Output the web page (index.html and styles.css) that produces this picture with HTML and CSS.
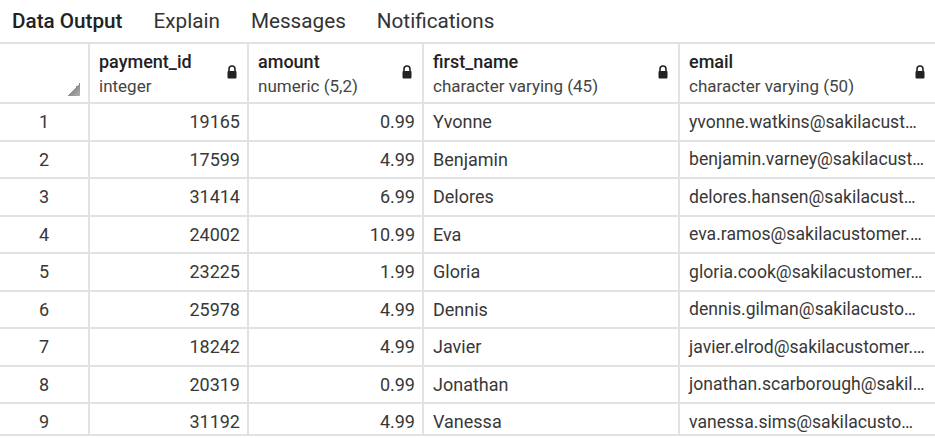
FILE: index.html
```html
<!DOCTYPE html>
<html>
<head>
<meta charset="utf-8">
<link rel="stylesheet" href="styles.css">
</head>
<body>
<div class="tabs">
  <span class="tab active">Data Output</span>
  <span class="tab">Explain</span>
  <span class="tab">Messages</span>
  <span class="tab">Notifications</span>
</div>
<div class="gridwrap">
  <div class="grid">
    <div class="hcell corner"><span class="tri"></span></div>
    <div class="hcell"><div class="htext"><b>payment_id</b><span>integer</span></div><svg class="lock" viewBox="0 0 10 14"><path d="M2 6V4a3 3 0 0 1 6 0v2" fill="none" stroke="#222" stroke-width="1.6"/><rect x="0.5" y="6" width="9" height="7.5" rx="1" fill="#222"/></svg></div>
    <div class="hcell"><div class="htext"><b>amount</b><span>numeric (5,2)</span></div><svg class="lock" viewBox="0 0 10 14"><path d="M2 6V4a3 3 0 0 1 6 0v2" fill="none" stroke="#222" stroke-width="1.6"/><rect x="0.5" y="6" width="9" height="7.5" rx="1" fill="#222"/></svg></div>
    <div class="hcell"><div class="htext"><b>first_name</b><span>character varying (45)</span></div><svg class="lock" viewBox="0 0 10 14"><path d="M2 6V4a3 3 0 0 1 6 0v2" fill="none" stroke="#222" stroke-width="1.6"/><rect x="0.5" y="6" width="9" height="7.5" rx="1" fill="#222"/></svg></div>
    <div class="hcell"><div class="htext"><b>email</b><span>character varying (50)</span></div><svg class="lock" viewBox="0 0 10 14"><path d="M2 6V4a3 3 0 0 1 6 0v2" fill="none" stroke="#222" stroke-width="1.6"/><rect x="0.5" y="6" width="9" height="7.5" rx="1" fill="#222"/></svg></div>

    <div class="cell num">1</div><div class="cell r">19165</div><div class="cell r">0.99</div><div class="cell">Yvonne</div><div class="cell em">yvonne.watkins@sakilacust…</div>
    <div class="cell num">2</div><div class="cell r">17599</div><div class="cell r">4.99</div><div class="cell">Benjamin</div><div class="cell em">benjamin.varney@sakilacust…</div>
    <div class="cell num">3</div><div class="cell r">31414</div><div class="cell r">6.99</div><div class="cell">Delores</div><div class="cell em">delores.hansen@sakilacust…</div>
    <div class="cell num">4</div><div class="cell r">24002</div><div class="cell r">10.99</div><div class="cell">Eva</div><div class="cell em">eva.ramos@sakilacustomer.…</div>
    <div class="cell num">5</div><div class="cell r">23225</div><div class="cell r">1.99</div><div class="cell">Gloria</div><div class="cell em">gloria.cook@sakilacustomer…</div>
    <div class="cell num">6</div><div class="cell r">25978</div><div class="cell r">4.99</div><div class="cell">Dennis</div><div class="cell em">dennis.gilman@sakilacusto…</div>
    <div class="cell num">7</div><div class="cell r">18242</div><div class="cell r">4.99</div><div class="cell">Javier</div><div class="cell em">javier.elrod@sakilacustomer.…</div>
    <div class="cell num">8</div><div class="cell r">20319</div><div class="cell r">0.99</div><div class="cell">Jonathan</div><div class="cell em">jonathan.scarborough@sakil…</div>
    <div class="cell num">9</div><div class="cell r">31192</div><div class="cell r">4.99</div><div class="cell">Vanessa</div><div class="cell em">vanessa.sims@sakilacusto…</div>
  </div>
</div>
</body>
</html>
```
FILE: styles.css
```css
* { box-sizing: border-box; }
html, body { margin: 0; padding: 0; background: #fff; }
body {
  font-family: Roboto, "Noto Sans", sans-serif;
  color: #333;
  width: 935px;
  height: 438px;
  overflow: hidden;
}
.tabs {
  display: flex;
  gap: 31px;
  height: 42px;
  padding: 0 0 0 12px;
  align-items: center;
  font-size: 20.7px;
  color: #333;
}
.tab.active { font-weight: 500; color: #222; }
.gridwrap {
  height: 394px;
  overflow: hidden;
  border-top: 2px solid #e2e2e2;
  border-bottom: 2px solid #e2e2e2;
}
.grid {
  display: grid;
  grid-template-columns: 88px 157px 173px 254px 255px;
  grid-template-rows: 58px repeat(9, 35.5px);
  column-gap: 2px;
  row-gap: 2px;
  background: #e2e2e2;
  width: 935px;
}
.hcell {
  background: #fff;
  display: flex;
  align-items: center;
  justify-content: space-between;
  padding: 0 10px 0 9px;
  position: relative;
}
.htext { display: flex; flex-direction: column; font-size: 17px; line-height: 24px; margin-top: 2px; }
.htext b { font-weight: 500; color: #222; font-size: 18px; }
.htext span { color: #444; }
.lock { width: 10px; height: 14px; margin-top: -2px; }
.corner { padding: 0; }
.tri {
  position: absolute;
  right: 8px;
  bottom: 6px;
  width: 13px;
  height: 13px;
  background: linear-gradient(135deg, transparent 50%, #8a8a8a 50%, #b0b0b0 100%);
}
.cell {
  background: #fff;
  font-size: 18px;
  display: flex;
  align-items: center;
  padding: 0 9px 0 9px;
  color: #383838;
  white-space: nowrap;
  overflow: hidden;
  min-width: 0;
}
.cell.em { padding: 0 0 0 9px; font-size: 17.6px; }
.cell.num { justify-content: center; }
.cell.r { justify-content: flex-end; padding-right: 7px; }
```
